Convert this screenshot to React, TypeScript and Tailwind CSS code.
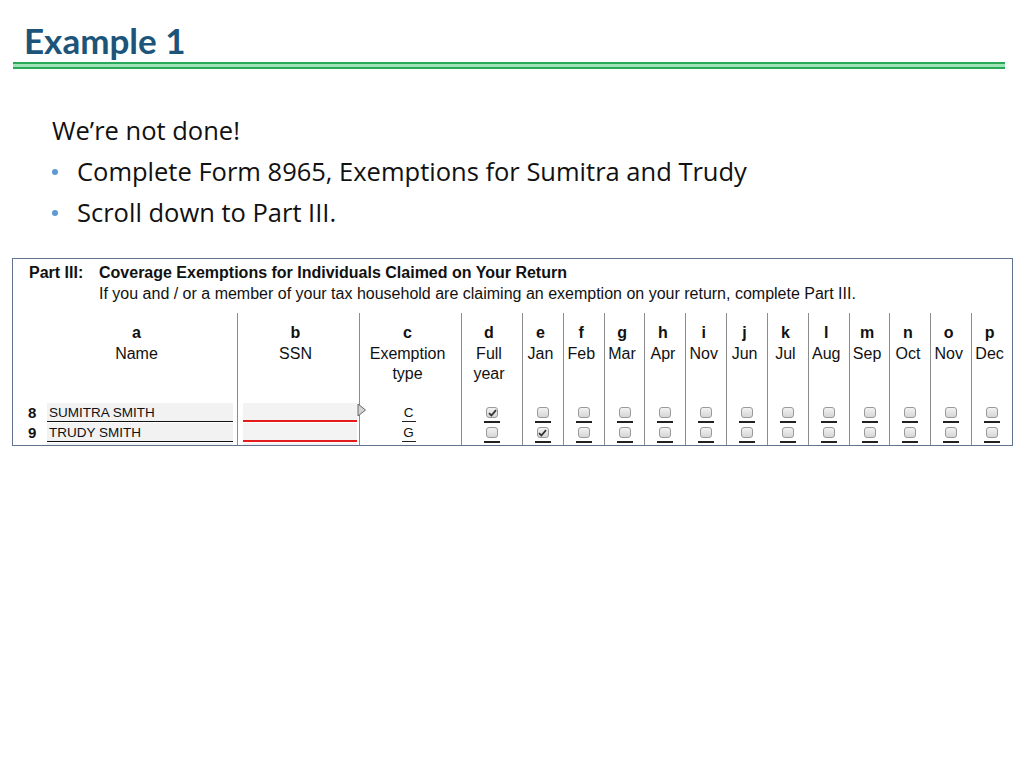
import React from "react";

const months = [
  ["e", "Jan"], ["f", "Feb"], ["g", "Mar"], ["h", "Apr"], ["i", "Nov"], ["j", "Jun"],
  ["k", "Jul"], ["l", "Aug"], ["m", "Sep"], ["n", "Oct"], ["o", "Nov"], ["p", "Dec"],
];

function Check({ checked }: { checked?: boolean }) {
  return (
    <div className="flex flex-col items-center h-[20px] pt-[4px]">
      <div className="w-[12px] h-[12px] rounded-[3px] border border-[#9a9a9a] bg-gradient-to-b from-[#f2f2f2] to-[#d6d6d6] flex items-center justify-center">
        {checked && (
          <svg width="9" height="8" viewBox="0 0 9 8">
            <path d="M1 4.2 L3.4 6.5 L8 1.2" fill="none" stroke="#333" strokeWidth="1.8" />
          </svg>
        )}
      </div>
      <div className="mt-[3px] w-[16px] h-[2px] bg-[#222]" />
    </div>
  );
}

function Header({ letter, l1, l2 }: { letter: string; l1: string; l2?: string }) {
  return (
    <div className="h-[90px] pt-[10px] text-center leading-[20.5px]">
      <div className="font-bold">{letter}</div>
      <div>{l1}</div>
      {l2 && <div>{l2}</div>}
    </div>
  );
}

export default function App() {
  return (
    <div className="w-[1024px] h-[768px] bg-white relative overflow-hidden" style={{ fontFamily: "Lato, 'Open Sans', sans-serif" }}>
      <div className="pt-[20px] pl-[24px] h-[62px]">
        <h1 className="text-[35px] leading-[40px] font-bold text-[#1d5479]" style={{ fontFamily: "Lato, sans-serif" }}>Example 1</h1>
      </div>
      <div className="ml-[13px] w-[992px] h-[7px] border-y-2 border-[#2aa95a] bg-[#9fe3b7]" />

      <div className="pl-[52px] pt-[41px] text-[25.5px] leading-[41px] text-[#111]" style={{ fontFamily: "'Open Sans', sans-serif" }}>
        <div>We’re not done!</div>
        <div className="flex items-center">
          <span className="w-[10px] h-[6px] mr-[15px] flex items-center"><span className="w-[6px] h-[6px] rounded-full bg-[#5b9bd5]" /></span>
          <span>Complete Form 8965, Exemptions for Sumitra and Trudy</span>
        </div>
        <div className="flex items-center">
          <span className="w-[10px] h-[6px] mr-[15px] flex items-center"><span className="w-[6px] h-[6px] rounded-full bg-[#5b9bd5]" /></span>
          <span>Scroll down to Part III.</span>
        </div>
      </div>

      <div className="absolute left-[12px] top-[258px] w-[1001px] h-[188px] border border-[#5f7390] overflow-hidden text-[16px] text-[#111]" style={{ fontFamily: "'Liberation Sans', Arial, sans-serif" }}>
        <div className="pt-[3px] pl-[16px] flex text-[16px] leading-[21px] h-[54px]">
          <div className="w-[70px] font-bold">Part III:</div>
          <div>
            <div className="font-bold">Coverage Exemptions for Individuals Claimed on Your Return</div>
            <div>If you and / or a member of your tax household are claiming an exemption on your return, complete Part III.</div>
          </div>
        </div>
        <div className="grid grid-cols-[224px_122px_102px_61px_repeat(12,1fr)] h-[140px]">
          {/* a */}
          <div>
            <div className="pl-[23px]"><Header letter="a" l1="Name" /></div>
            {[["8", "SUMITRA SMITH"], ["9", "TRUDY SMITH"], ["", ""]].map(([n, name], i) => (
              <div key={i} className="flex h-[20px] items-start pl-[15px]">
                <div className="w-[19px] font-bold text-[15px] leading-[20px]">{n}</div>
                <div className="w-[186px] h-[19px] bg-[#f2f2f2] border-b border-[#111] text-[13.5px] leading-[19px] pl-[2px]">{name}</div>
              </div>
            ))}
          </div>
          {/* b */}
          <div className="border-l-[1.5px] border-[#8c8c8c] relative">
            <div className="pr-[6px]"><Header letter="b" l1="SSN" /></div>
            {[0, 1, 2].map((i) => (
              <div key={i} className="h-[20px] pl-[5px]">
                <div className="w-[114px] h-[19px] bg-[#f3f3f3] border-b-2 border-[#e41b1b]" />
              </div>
            ))}
            <svg className="absolute left-[119px] top-[90px]" width="10" height="14" viewBox="0 0 10 14">
              <path d="M1 1 L8.5 7 L1 13 Z" fill="#d4d4d4" stroke="#666" strokeWidth="1" />
            </svg>
          </div>
          {/* c */}
          <div className="border-l-[1.5px] border-[#8c8c8c]">
            <div className="pr-[6px]"><Header letter="c" l1="Exemption" l2="type" /></div>
            {["C", "G", ""].map((t, i) => (
              <div key={i} className="h-[20px] flex justify-center pr-[4px]">
                <div className="w-[14px] h-[19px] border-b-[1.5px] border-[#222] text-[13.5px] leading-[19px] text-center">{t}</div>
              </div>
            ))}
          </div>
          {/* d */}
          <div className="border-l-[1.5px] border-[#8c8c8c]">
            <div className="pr-[6px]"><Header letter="d" l1="Full" l2="year" /></div>
            <Check checked />
            <Check />
            <Check />
          </div>
          {months.map(([l, m], idx) => (
            <div key={idx} className="border-l-[1.5px] border-[#8c8c8c]">
              <div className="pr-[5px]"><Header letter={l} l1={m} /></div>
              <Check />
              <Check checked={idx === 0} />
              <Check />
            </div>
          ))}
        </div>
      </div>
    </div>
  );
}
